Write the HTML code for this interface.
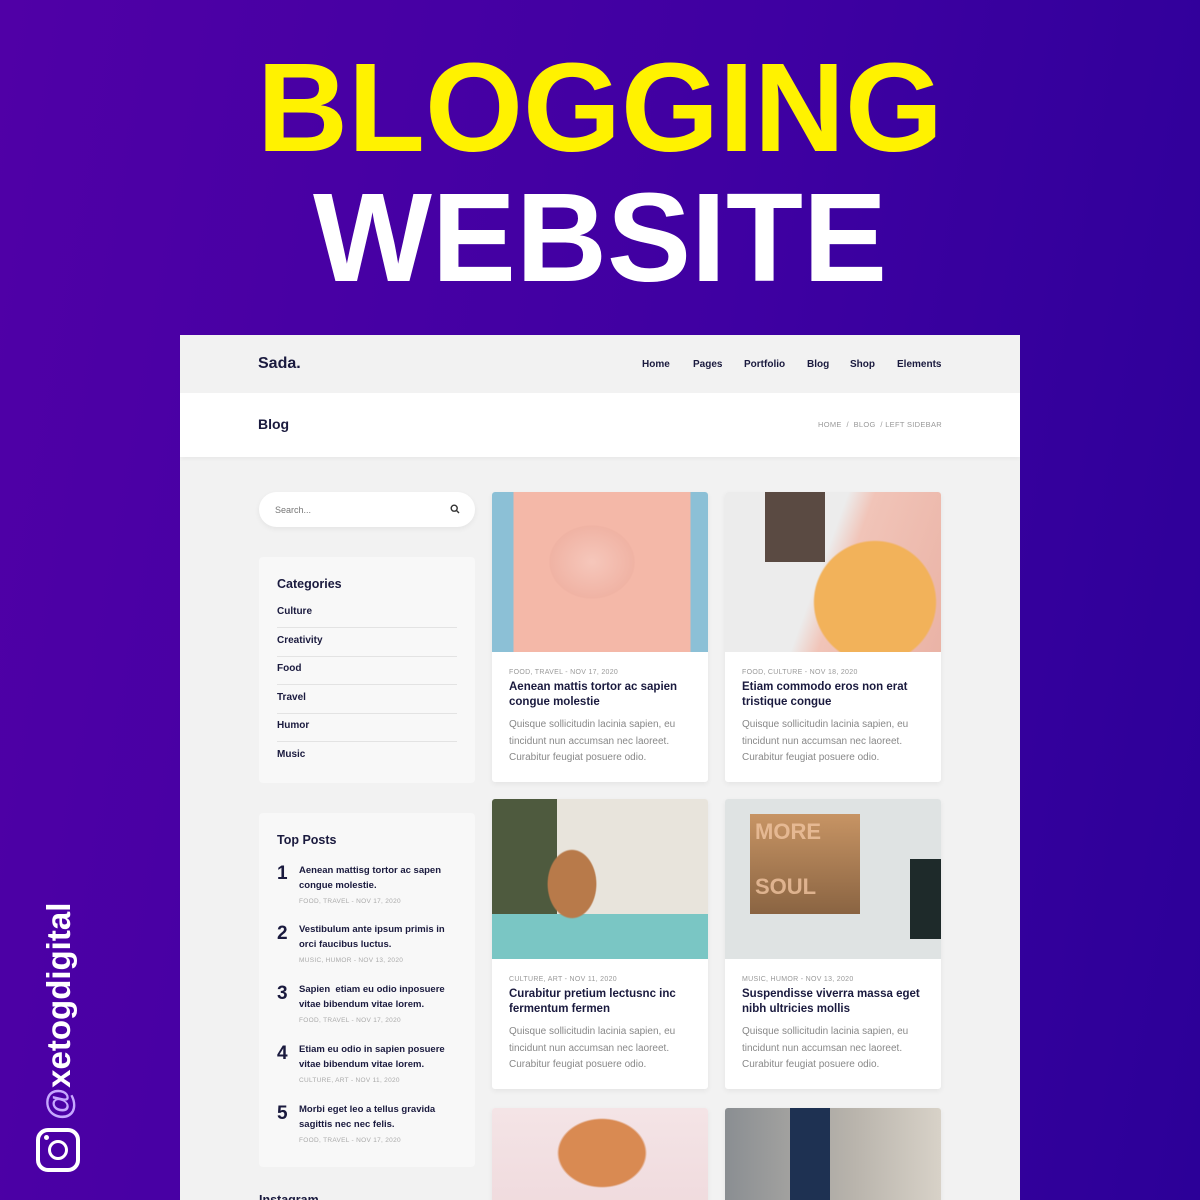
<!DOCTYPE html>
<html><head><meta charset="utf-8"><style>
*{margin:0;padding:0;box-sizing:border-box}
body{width:1200px;height:1200px;overflow:hidden;position:relative;font-family:"Liberation Sans",sans-serif;background:linear-gradient(100deg,#5000a6 0%,#3f00a2 55%,#2c0098 100%)}
.a{position:absolute}
.t{font-weight:bold;text-align:center;left:0;width:1200px;font-size:126px;line-height:1}
.mock{left:180px;top:335px;width:840px;height:865px;background:#f2f2f2;overflow:hidden}
.nav{font-size:10px;font-weight:bold;color:#1a1a3e;top:24px}
.box{background:#f8f8f8;border-radius:4px}
.card{background:#fff;border-radius:3px;box-shadow:0 2px 6px rgba(0,0,0,.06);overflow:hidden;width:216px}
.img{height:160px;width:216px}
.meta{font-size:7px;color:#999;letter-spacing:.3px;position:absolute;left:17px}
.ct{font-size:11.5px;font-weight:bold;color:#1a1a3e;line-height:15px;position:absolute;left:17px;top:28px;width:190px}
.cx{font-size:10px;color:#888;line-height:16.5px;position:absolute;left:17px;top:65px;width:190px}
.cat{left:18px;width:180px;font-size:10px;font-weight:bold;color:#1a1a3e;border-bottom:1px solid #e3e3e3;height:28.5px;padding-top:7px}
.tp .n{position:absolute;left:0;font-size:19px;font-weight:bold;color:#1a1a3e}
.tp .h{position:absolute;left:22px;font-size:9.5px;font-weight:bold;color:#1a1a3e;line-height:15px;width:160px}
.tp .m{position:absolute;left:22px;font-size:6.5px;color:#aaa;letter-spacing:.3px}
</style></head><body>
<div class="a t" style="top:45px;color:#fff200">BLOGGING</div>
<div class="a t" style="top:175px;color:#fff">WEBSITE</div>

<div class="a mock">
 <div class="a" style="left:0;top:0;width:840px;height:58px;background:#f2f2f2"></div>
 <div class="a" style="left:78px;top:20px;font-size:16px;font-weight:bold;color:#1a1a3e">Sada.</div>
 <div class="a nav" style="left:462px">Home</div>
 <div class="a nav" style="left:513px">Pages</div>
 <div class="a nav" style="left:564px">Portfolio</div>
 <div class="a nav" style="left:627px">Blog</div>
 <div class="a nav" style="left:670px">Shop</div>
 <div class="a nav" style="left:717px">Elements</div>
 <div class="a" style="left:0;top:58px;width:840px;height:64px;background:#fff;box-shadow:0 2px 4px rgba(0,0,0,.04)"></div>
 <div class="a" style="left:78px;top:81px;font-size:14px;font-weight:bold;color:#1a1a3e">Blog</div>
 <div class="a" style="left:638px;top:85px;font-size:7.5px;color:#999;letter-spacing:.3px">HOME &nbsp;/&nbsp; BLOG &nbsp;/ LEFT SIDEBAR</div>

 <div class="a" style="left:79px;top:157px;width:216px;height:35px;background:#fff;border-radius:18px;box-shadow:0 2px 6px rgba(0,0,0,.06)"></div>
 <div class="a" style="left:95px;top:170px;font-size:9px;color:#777">Search...</div>
 <svg class="a" style="left:270px;top:169px" width="10" height="10" viewBox="0 0 10 10"><circle cx="4.2" cy="4.2" r="3" fill="none" stroke="#333" stroke-width="1.4"/><path d="M6.4 6.4 9 9" stroke="#333" stroke-width="1.4"/></svg>

 <div class="a box" style="left:79px;top:222px;width:216px;height:226px">
  <div class="a" style="left:18px;top:20px;font-size:12.5px;font-weight:bold;color:#1a1a3e">Categories</div>
  <div class="a cat" style="top:42px">Culture</div>
  <div class="a cat" style="top:71px">Creativity</div>
  <div class="a cat" style="top:99px">Food</div>
  <div class="a cat" style="top:128px">Travel</div>
  <div class="a cat" style="top:156px">Humor</div>
  <div class="a cat" style="top:185px;border:none">Music</div>
 </div>

 <div class="a box" style="left:79px;top:478px;width:216px;height:354px">
  <div class="a" style="left:18px;top:20px;font-size:12.5px;font-weight:bold;color:#1a1a3e">Top Posts</div>
  <div class="a tp" style="left:18px;top:50px;width:190px;height:300px">
   <div class="n" style="top:0">1</div><div class="h" style="top:0">Aenean mattisg tortor ac sapen congue molestie.</div><div class="m" style="top:35px">FOOD, TRAVEL - NOV 17, 2020</div>
   <div class="n" style="top:60px">2</div><div class="h" style="top:59px">Vestibulum ante ipsum primis in orci faucibus luctus.</div><div class="m" style="top:94px">MUSIC, HUMOR - NOV 13, 2020</div>
   <div class="n" style="top:120px">3</div><div class="h" style="top:119px">Sapien &nbsp;etiam eu odio inposuere vitae bibendum vitae lorem.</div><div class="m" style="top:154px">FOOD, TRAVEL - NOV 17, 2020</div>
   <div class="n" style="top:180px">4</div><div class="h" style="top:179px">Etiam eu odio in sapien posuere vitae bibendum vitae lorem.</div><div class="m" style="top:214px">CULTURE, ART - NOV 11, 2020</div>
   <div class="n" style="top:240px">5</div><div class="h" style="top:239px">Morbi eget leo a tellus gravida sagittis nec nec felis.</div><div class="m" style="top:274px">FOOD, TRAVEL - NOV 17, 2020</div>
  </div>
 </div>
 <div class="a" style="left:79px;top:858px;font-size:12.5px;font-weight:bold;color:#1a1a3e">Instagram</div>

 <div class="a card" style="left:312px;top:157px;height:290px">
  <div class="img" style="background:radial-gradient(ellipse 70px 60px at 100px 70px,#f6c7bb,#f0b3a4 60%,transparent 62%),linear-gradient(90deg,#8cc0d6 0 10%,#f4b8a8 10% 92%,#8cc0d6 92%);"></div>
  <div class="meta" style="top:177px">FOOD, TRAVEL - NOV 17, 2020</div>
  <div class="ct" style="top:188px">Aenean mattis tortor ac sapien congue molestie</div>
  <div class="cx" style="top:225px">Quisque sollicitudin lacinia sapien, eu tincidunt nun accumsan nec laoreet. Curabitur feugiat posuere odio.</div>
 </div>
 <div class="a card" style="left:545px;top:157px;height:290px">
  <div class="img" style="background:radial-gradient(circle 62px at 150px 110px,#f2b25a 97%,transparent 100%),linear-gradient(100deg,#5a4a42 0 0) 40px 0/60px 70px no-repeat,linear-gradient(110deg,#ececec 0 45%,#f1c4b8 55%,#eab3a6);"></div>
  <div class="meta" style="top:177px">FOOD, CULTURE - NOV 18, 2020</div>
  <div class="ct" style="top:188px">Etiam commodo eros non erat tristique congue</div>
  <div class="cx" style="top:225px">Quisque sollicitudin lacinia sapien, eu tincidunt nun accumsan nec laoreet. Curabitur feugiat posuere odio.</div>
 </div>
 <div class="a card" style="left:312px;top:464px;height:290px">
  <div class="img" style="background:radial-gradient(ellipse 25px 35px at 80px 85px,#b87a4a 95%,transparent),linear-gradient(180deg,transparent 0 72%,#7ac6c4 72%),linear-gradient(90deg,#4e5a3e 0 30%,#e8e4dc 30%);"></div>
  <div class="meta" style="top:177px">CULTURE, ART - NOV 11, 2020</div>
  <div class="ct" style="top:188px">Curabitur pretium lectusnc inc fermentum fermen</div>
  <div class="cx" style="top:225px">Quisque sollicitudin lacinia sapien, eu tincidunt nun accumsan nec laoreet. Curabitur feugiat posuere odio.</div>
 </div>
 <div class="a card" style="left:545px;top:464px;height:290px">
  <div class="img" style="background:linear-gradient(90deg,transparent 0 185px,#1e2a2a 185px) 0 60px/216px 80px no-repeat,linear-gradient(#c79464,#8a6442) 25px 15px/110px 100px no-repeat,#dfe3e3;"></div>
  <div class="a" style="left:30px;top:20px;font-size:22px;font-weight:bold;color:#f0c4a0;opacity:.8">MORE</div>
  <div class="a" style="left:30px;top:75px;font-size:22px;font-weight:bold;color:#f0c4a0;opacity:.8">SOUL</div>
  <div class="meta" style="top:177px">MUSIC, HUMOR - NOV 13, 2020</div>
  <div class="ct" style="top:188px">Suspendisse viverra massa eget nibh ultricies mollis</div>
  <div class="cx" style="top:225px">Quisque sollicitudin lacinia sapien, eu tincidunt nun accumsan nec laoreet. Curabitur feugiat posuere odio.</div>
 </div>
 <div class="a card" style="left:312px;top:773px;height:120px">
  <div class="img" style="height:120px;background:radial-gradient(ellipse 45px 35px at 110px 45px,#d98a52 95%,transparent),linear-gradient(#f4e4e6,#efd9dc);"></div>
 </div>
 <div class="a card" style="left:545px;top:773px;height:120px">
  <div class="img" style="height:120px;background:linear-gradient(90deg,transparent 0 65px,#1e3152 65px 105px,transparent 105px),linear-gradient(90deg,#8a8e92,#b9b4ac 60%,#d8d2c8);"></div>
 </div>
</div>

<div class="a" style="left:36px;top:1128px;width:44px;height:44px;border:4px solid #fff;border-radius:12px"></div>
<div class="a" style="left:48px;top:1140px;width:20px;height:20px;border:3.5px solid #fff;border-radius:50%"></div>
<div class="a" style="left:44px;top:1135px;width:5px;height:5px;background:#fff;border-radius:50%"></div>
<div class="a" style="left:-51px;top:990px;width:220px;height:40px;transform:rotate(-90deg);transform-origin:center;color:#fff;font-size:33px;font-weight:bold;line-height:40px;white-space:nowrap"><span style="color:#c7a8ff">@</span>xetogdigital</div>
</body></html>
